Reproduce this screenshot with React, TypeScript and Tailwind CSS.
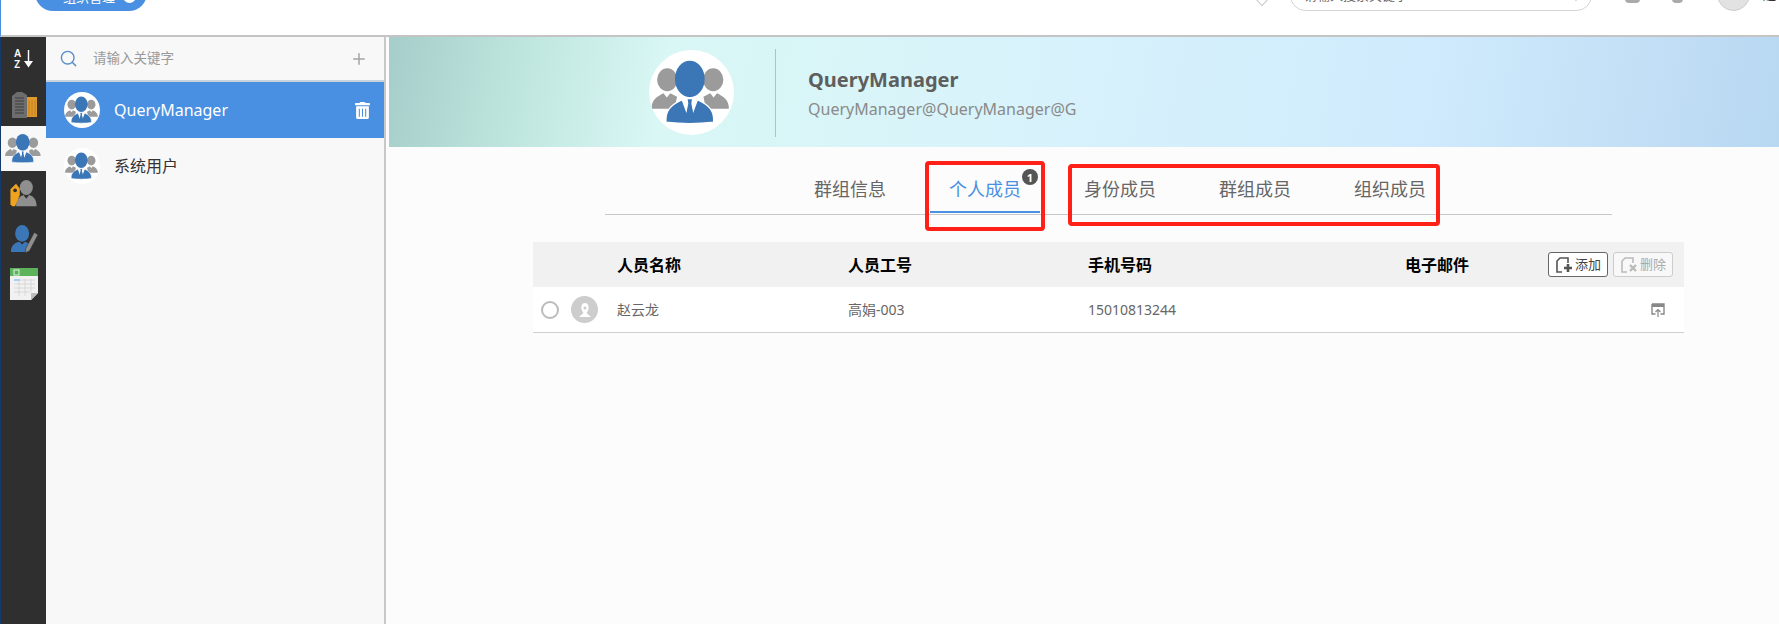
import React from 'react';
import { Plus, Search } from 'lucide-react';
import { FaTrashAlt } from 'react-icons/fa';

const FONT = { fontFamily: '"Noto Sans", "Noto Sans CJK SC", sans-serif' };

const TABS = ['群组信息', '个人成员', '身份成员', '群组成员', '组织成员'];

const COLUMNS = 'grid grid-cols-[84px_231px_240px_317px_80px_1fr] items-center';

const PeopleIcon = ({ className }: { className: string }) => (
  <svg viewBox="0 0 100 100" className={className}>
    <g fill="#9b9b9b">
      <ellipse cx="21.5" cy="35" rx="12" ry="13.5" />
      <ellipse cx="75.5" cy="35" rx="12" ry="13.5" />
      <path d="M3 69C3 59 9 55 17 51L21 56L25 51L33 55L30 69Z" />
      <path d="M94 69C94 59 88 55 80 51L76 56L72 51L64 55L67 69Z" />
    </g>
    <path d="M20 85C19 72 25 65 38 59L48 56L58 59C71 65 77 72 76 85C60 87 36 87 20 85Z" fill="#3b76b6" stroke="#fff" strokeWidth="1.5" />
    <ellipse cx="48" cy="34" rx="17.5" ry="21.5" fill="#3b76b6" />
    <path d="M38 58L48 56L58 58L52 74L48 60L44 74Z" fill="#fff" />
    <path d="M45.5 58H50.5L49.8 63L51.5 72L48 78L44.5 72L46.2 63Z" fill="#3b76b6" />
  </svg>
);

const SortIcon = () => (
  <div className="flex items-center gap-[3px] text-white">
    <div className="flex flex-col text-[10px] leading-[11px] font-semibold">
      <span>A</span>
      <span>Z</span>
    </div>
    <svg viewBox="0 0 10 20" className="h-[20px] w-[9px]">
      <path d="M5 0V17M1.5 13L5 18L8.5 13Z" fill="#fff" stroke="#fff" strokeWidth="1.6" />
    </svg>
  </div>
);

const BuildingIcon = () => (
  <svg viewBox="0 0 26 28" className="h-[28px] w-[26px]">
    <path d="M1 6L6 2H11L16 5V28H1Z" fill="#6d6d6d" />
    <path d="M4 8H13M4 11H13M4 14H13M4 17H13M4 20H13M4 23H13" stroke="#3c3c3c" strokeWidth="1.2" />
    <path d="M16 7H26V27H16Z" fill="#e09a2b" />
    <path d="M18 10V26M21 10V26M24 10V26" stroke="#b97a1c" strokeWidth="0.8" />
  </svg>
);

const KeyPersonIcon = () => (
  <svg viewBox="0 0 30 30" className="h-[28px] w-[29px]">
    <ellipse cx="18" cy="8" rx="7" ry="8" fill="#8f8f8f" />
    <path d="M7 28C7 20 12 17 15 16L18 20L21 16C25 17 29 20 29 28Z" fill="#8f8f8f" />
    <path d="M1 10L7 4L11 9V16L6 28H3L1 26Z" fill="#f0a31f" />
    <circle cx="6" cy="11" r="2" fill="#2f2f2f" />
  </svg>
);

const EditorIcon = () => (
  <svg viewBox="0 0 30 30" className="h-[28px] w-[28px]">
    <ellipse cx="13" cy="9" rx="7.5" ry="9" fill="#3b76b6" />
    <path d="M1 29C1 22 5 19 10 18L13 21L16 18C19 19 21 20 22 22L17 29Z" fill="#3b76b6" />
    <path d="M17 25L26 8L30 10.5L21 27.5L16.5 30Z" fill="#8f8f8f" stroke="#2f2f2f" strokeWidth="0.6" />
  </svg>
);

const SheetIcon = () => (
  <svg viewBox="0 0 28 32" className="h-[32px] w-[28px]">
    <path d="M0 0H28V25L21 32H0Z" fill="#f1f1f1" />
    <path d="M0 0H28V8H0Z" fill="#5cb35c" />
    <rect x="4" y="2" width="5" height="5" fill="none" stroke="#dff1df" strokeWidth="1" />
    <path d="M4 12H25M4 16H25M4 20H25M4 24H20M9 11V28M15 11V28M21 11V24" stroke="#cfcfcf" strokeWidth="0.7" />
    <path d="M4 12H10" stroke="#a9cdf5" strokeWidth="2" />
    <path d="M21 32L21 25H28Z" fill="#bdbdbd" />
  </svg>
);

const DocIcon = ({ mark }: { mark: 'plus' | 'cross' }) => {
  const color = mark === 'plus' ? '#555' : '#bbb';

  return (
    <svg viewBox="0 0 18 18" className="h-[18px] w-[18px] shrink-0">
      <path d="M9 2H5L2 5V16H7M9 2H13V7" fill="none" stroke={color} strokeWidth="1.6" />
      {mark === 'plus' ? (
        <path d="M13 8V16M9 12H17" stroke={color} strokeWidth="2.6" />
      ) : (
        <path d="M10 9L16 15M16 9L10 15" stroke={color} strokeWidth="2.4" />
      )}
    </svg>
  );
};

const RailItem = ({
  active,
  first,
  children,
}: {
  active?: boolean;
  first?: boolean;
  children: React.ReactNode;
}) => (
  <div
    className={`flex items-center justify-center ${first ? 'h-[44px]' : 'h-[45px]'} ${
      active ? 'bg-[#f8f8f8]' : ''
    }`}
  >
    {children}
  </div>
);

export default function App() {
  return (
    <div className="relative flex h-[624px] w-[1779px] flex-col overflow-hidden bg-white" style={FONT}>
      <header className="flex h-[37px] shrink-0 items-start overflow-hidden border-b-2 border-l border-b-[#c4c4c4] border-l-[#4a90e2] bg-white">
        <div className="-mt-[25px] ml-[34px] flex h-[36px] w-[112px] shrink-0 items-end gap-[8px] rounded-full bg-[#4a90e2] pb-[8px] pl-[28px] text-[13px] leading-none whitespace-nowrap text-white">
          <span className="-mb-px">组织管理</span>
          <span className="h-[13px] w-[13px] shrink-0 rounded-full bg-white" />
        </div>
        <svg viewBox="0 0 14 8" className="mt-0 ml-[1108px] h-[7px] w-[14px] shrink-0">
          <path d="M1 0L7 6.5L13 0" fill="none" stroke="#aaa" strokeWidth="1" />
        </svg>
        <div className="-mt-[20px] ml-[21px] flex h-[31px] w-[302px] shrink-0 items-end justify-between rounded-full border border-[#d4d4d4] bg-white px-[13px] pb-[8px] text-[13px] leading-none whitespace-nowrap text-[#666]">
          <span>请输入搜索关键字</span>
          <Search className="h-4 w-4 shrink-0 text-[#aaa]" />
        </div>
        <div className="-mt-[4px] ml-[33px] h-[7px] w-[15px] shrink-0 rounded-b-sm bg-[#aaa]" />
        <div className="-mt-[4px] ml-[32px] h-[7px] w-[11px] shrink-0 rounded-b-sm bg-[#aaa]" />
        <div className="-mt-[22px] ml-[34px] h-[33px] w-[33px] shrink-0 rounded-full border border-[#ccc] bg-[#e2e2e2]" />
        <span className="-mt-[12px] ml-[13px] shrink-0 text-[13px] leading-none whitespace-nowrap text-[#333]">
          超级管理员
        </span>
      </header>

      <div className="flex min-h-0 flex-1">
        <nav className="w-[46px] shrink-0 border-l border-[#143a6b] bg-[#2f2f2f]">
          <RailItem first>
            <SortIcon />
          </RailItem>
          <RailItem>
            <BuildingIcon />
          </RailItem>
          <RailItem active>
            <PeopleIcon className="h-[39px] w-[39px]" />
          </RailItem>
          <RailItem>
            <KeyPersonIcon />
          </RailItem>
          <RailItem>
            <EditorIcon />
          </RailItem>
          <RailItem>
            <SheetIcon />
          </RailItem>
        </nav>

        <aside className="w-[338px] shrink-0 bg-[#f8f8f8]">
          <div className="flex h-[45px] items-center border-b-2 border-[#c9d3dd] pr-[16px] pl-[13px]">
            <Search className="h-[19px] w-[19px] text-[#5b8fc7]" strokeWidth={1.8} />
            <span className="ml-[15px] flex-1 text-[13.5px] text-[#9a9a9a]">请输入关键字</span>
            <Plus className="h-[18px] w-[18px] text-[#a5a5a5]" />
          </div>
          <div className="flex h-[56px] items-center bg-[#4a90e2] pr-[14px] pl-[18px] text-white">
            <PeopleIcon className="h-[36px] w-[36px] rounded-full bg-white" />
            <span className="ml-[14px] flex-1 text-[16px]">QueryManager</span>
            <FaTrashAlt className="h-[17px] w-[15px]" />
          </div>
          <div className="flex h-[56px] items-center pl-[18px] text-[#333]">
            <PeopleIcon className="h-[36px] w-[36px] rounded-full bg-white" />
            <span className="ml-[14px] text-[16px]">系统用户</span>
          </div>
        </aside>

        <main className="min-w-0 flex-1 border-l-2 border-[#c8c8c8] bg-[#fcfcfc] pl-[3px]">
          <div className="flex h-[110px] items-center bg-[linear-gradient(100deg,#a7cdca_0%,#bfe6de_10%,#d9f7f5_20%,#d8f3fb_45%,#cfeafc_75%,#b8d7f1_100%)] pl-[260px]">
            <PeopleIcon className="h-[85px] w-[85px] rounded-full bg-white" />
            <div className="mt-[2px] mr-[32px] ml-[41px] h-[88px] w-px bg-[#bdbdbd]" />
            <div className="mt-[2px]">
              <div className="text-[20px] leading-[28px] font-bold text-[#5e5e5e]">QueryManager</div>
              <div className="mt-[3px] text-[16px] leading-[24px] text-[#8a8a8a]">QueryManager@QueryManager@G</div>
            </div>
          </div>

          <div className="ml-[216px] flex h-[68px] w-[1007px] items-end gap-[25px] border-b border-[#c8c8c8] pb-px pl-[190px]">
            {TABS.map((tab, index) => (
              <div
                key={tab}
                className={`relative flex h-[46px] w-[110px] shrink-0 items-start justify-center text-[18px] leading-[44px] ${
                  index === 1 ? 'border-b-2 border-[#4a90e2] text-[#4a90e2]' : 'text-[#666]'
                }`}
              >
                {tab}
                {index === 1 && (
                  <span className="absolute top-[2px] right-[2px] flex h-[16px] w-[16px] items-center justify-center rounded-full bg-[#555] text-[11px] leading-none font-bold text-white">
                    1
                  </span>
                )}
              </div>
            ))}
          </div>

          <div className="mt-[27px] ml-[144px] w-[1151px]">
            <div className={`${COLUMNS} h-[45px] bg-[#f1f1f1] text-[16px] font-bold text-black`}>
              <span />
              <span>人员名称</span>
              <span>人员工号</span>
              <span>手机号码</span>
              <span>电子邮件</span>
              <div className="flex justify-end gap-[5px] pr-[11px] text-[13px] font-normal">
                <button className="flex h-[25px] w-[60px] shrink-0 items-center justify-center gap-[2px] rounded-[3px] border border-[#666] bg-white whitespace-nowrap text-[#444]">
                  <DocIcon mark="plus" />
                  添加
                </button>
                <button className="flex h-[25px] w-[60px] shrink-0 items-center justify-center gap-[2px] rounded-[3px] border border-[#ccc] bg-[#f8f8f8] whitespace-nowrap text-[#aaa]">
                  <DocIcon mark="cross" />
                  删除
                </button>
              </div>
            </div>
            <div className={`${COLUMNS} h-[46px] border-b border-[#d0d0d0] bg-white text-[14px] text-[#666]`}>
              <div className="flex items-center gap-[12px] pl-[8px]">
                <span className="h-[18px] w-[18px] shrink-0 rounded-full border-2 border-[#bbb] bg-white" />
                <span className="flex h-[27px] w-[27px] shrink-0 items-center justify-center rounded-full bg-[#cdcdcd]">
                  <svg viewBox="0 0 20 20" className="h-[20px] w-[20px]">
                    <path d="M10 3C13 3 14 6 13.5 9C13 11 12 12 11.5 13L16 17H4L8.5 13C8 12 7 11 6.5 9C6 6 7 3 10 3Z" fill="#fff" />
                    <circle cx="10" cy="8" r="1.5" fill="#cdcdcd" />
                  </svg>
                </span>
              </div>
              <span>赵云龙</span>
              <span>高娟-003</span>
              <span>15010813244</span>
              <span />
              <div className="flex justify-end pr-[19px]">
                <svg viewBox="0 0 14 14" className="h-[14px] w-[14px]">
                  <path d="M1 1H13V11H9.5M4.5 11H1V1" fill="none" stroke="#888" strokeWidth="1.4" />
                  <path d="M1 1H13V4H1Z" fill="#888" />
                  <path d="M7 14V7M4.5 9L7 6.5L9.5 9" fill="none" stroke="#888" strokeWidth="1.2" />
                </svg>
              </div>
            </div>
          </div>
        </main>
      </div>

      <div className="pointer-events-none absolute top-[161px] left-[925px] h-[70px] w-[120px] rounded-[4px] border-[4px] border-[#ff2018]" />
      <div className="pointer-events-none absolute top-[164px] left-[1068px] h-[62px] w-[372px] rounded-[4px] border-[4px] border-[#ff2018]" />
    </div>
  );
}
